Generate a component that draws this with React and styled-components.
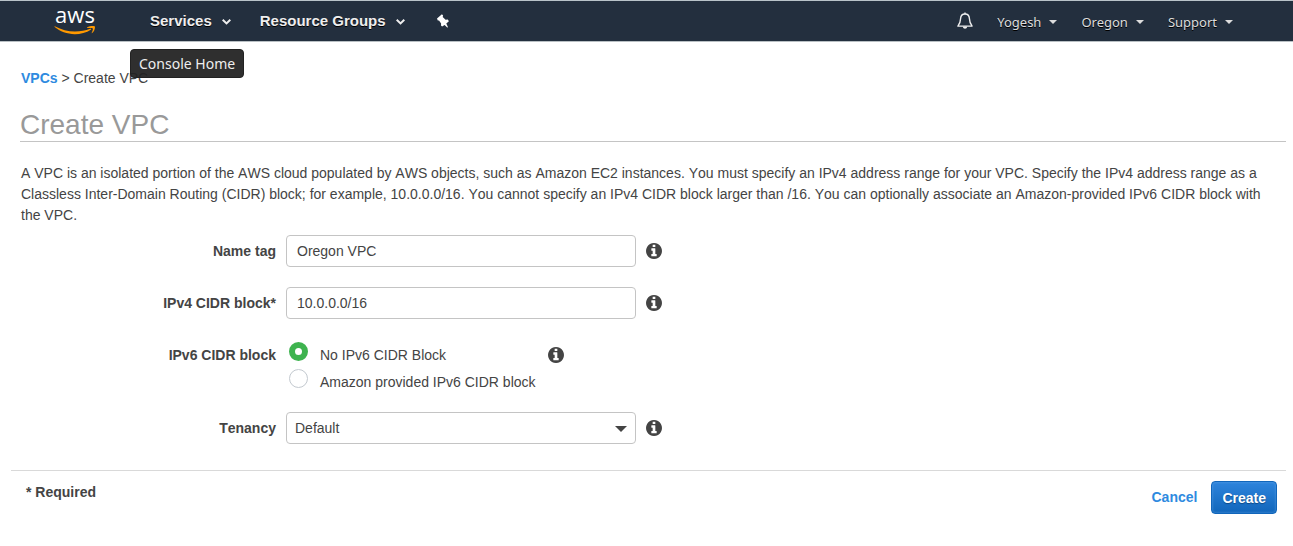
import React, { useState } from "react";
import styled, { createGlobalStyle } from "styled-components";

const GlobalStyle = createGlobalStyle`
  * { box-sizing: border-box; }
  body {
    margin: 0;
    background: #fff;
    color: #444;
    font: 14px/21px "Liberation Sans", Arial, sans-serif;
    font-kerning: none;
  }
`;

const Header = styled.header`
  display: flex;
  align-items: center;
  height: 42px;
  padding: 0 60px 0 54px;
  background: #232f3e;
  border-top: 1px solid #b9c3c9;
  border-bottom: 1px solid #b9c0c4;
`;

const Logo = styled.a`
  display: flex;
  flex-direction: column;
  align-items: center;
  gap: 5px;
  width: 42px;
  margin-right: 54px;
  color: #fff;
  font: 500 22px/14px "Open Sans", "Noto Sans", sans-serif;
  text-decoration: none;
  svg { display: block; }
`;

const NavGroup = styled.nav`
  display: flex;
  align-items: center;
  gap: ${(p) => p.$gap}px;
  margin-left: ${(p) => (p.$end ? "auto" : "0")};
`;

const MenuSlot = styled.div`
  position: relative;
`;

const MenuButton = styled.button`
  display: flex;
  align-items: center;
  gap: ${(p) => (p.$small ? 8 : 10)}px;
  padding: ${(p) => (p.$small ? "2px 0 0" : 0)};
  border: 0;
  background: none;
  color: ${(p) => (p.$small ? "#ddd" : "#eee")};
  font: ${(p) =>
    p.$small
      ? '13px/20px "Noto Sans", sans-serif'
      : 'bold 15px/20px "Liberation Sans", Arial, sans-serif'};
  font-kerning: auto;
  text-shadow: 0 1px 0 #000;
  cursor: pointer;
  svg { display: block; margin-top: ${(p) => (p.$small ? 0 : 2)}px; }
`;

const IconButton = styled.button`
  display: flex;
  padding: 0;
  border: 0;
  background: none;
  color: #fff;
  cursor: pointer;
`;

const Tooltip = styled.div`
  position: absolute;
  top: 38px;
  left: -20px;
  padding: 0 8px;
  border: 1px solid #222;
  border-radius: 4px;
  background: rgba(34, 34, 34, 0.94);
  color: #eee;
  font: 14px/27px "Noto Sans", sans-serif;
  white-space: nowrap;
`;

const Page = styled.main`
  padding: 26px 7px 0 11px;
`;

const Content = styled.div`
  padding-left: 9px;
`;

const Breadcrumb = styled.nav`
  padding: 0 1px;
`;

const Link = styled.a`
  color: #2e8ae0;
  font-weight: bold;
  text-decoration: none;
`;

const Title = styled.h1`
  margin: 20px 0 21px;
  border-bottom: 1px solid #c4c4c4;
  color: #999;
  font-size: 28px;
  font-weight: normal;
  line-height: 32px;
`;

const Intro = styled.p`
  margin: 0 0 9px;
  padding: 0 7px 0 1px;
`;

const Form = styled.form`
  margin: 0;
`;

const Row = styled.div`
  display: flex;
  align-items: ${(p) => (p.$top ? "flex-start" : "center")};
  gap: 10px;
  margin-bottom: ${(p) => (p.$top ? 19 : 20)}px;
  padding-top: ${(p) => (p.$top ? 6 : 0)}px;
`;

const Label = styled.label`
  width: 256px;
  color: #444;
  font-weight: bold;
  text-align: right;
`;

const TextInput = styled.input`
  width: 350px;
  height: 32px;
  padding: 0 10px;
  border: 1px solid #c4c4c4;
  border-radius: 4px;
  background: #fff;
  color: #444;
  font: inherit;
`;

const SelectBox = styled.div`
  display: grid;
  align-items: center;
  width: 350px;
  > * { grid-area: 1 / 1; }
  svg { justify-self: end; margin-right: 9px; margin-top: 2px; pointer-events: none; }
`;

const Select = styled.select`
  height: 32px;
  padding: 0 8px;
  border: 1px solid #c4c4c4;
  border-radius: 4px;
  background: #fff;
  color: #444;
  font: inherit;
  appearance: none;
`;

const RadioList = styled.div`
  display: flex;
  flex-direction: column;
  gap: 6px;
  width: 252px;
  padding: 0 3px;
`;

const RadioLabel = styled.label`
  display: flex;
  gap: 12px;
  white-space: nowrap;
`;

const Radio = styled.input`
  flex: none;
  width: 19px;
  height: 19px;
  margin: -3px 0 0;
  border: 1px solid #c3c9cf;
  border-radius: 50%;
  background: #fff;
  appearance: none;
  &:checked { border: 6px solid #3eb34f; }
`;

const InfoButton = styled.button`
  display: flex;
  padding: 0;
  margin-top: ${(p) => (p.$top ? 2 : 0)}px;
  border: 0;
  background: none;
  color: #444;
  cursor: pointer;
`;

const Footer = styled.footer`
  display: flex;
  justify-content: space-between;
  margin-top: 26px;
  padding: 10px 9px 0 15px;
  border-top: 1px solid #d9d9d9;
  font-weight: bold;
  line-height: 23px;
`;

const Actions = styled.div`
  display: flex;
  align-items: center;
  gap: 14px;
`;

const CreateButton = styled.button`
  height: 33px;
  padding: 1px 10px 0;
  border: 1px solid #1166bb;
  border-radius: 4px;
  background: linear-gradient(#2e84dc, #1166bb);
  box-shadow: inset 0 0 2px 1px rgba(100, 165, 230, 0.35);
  color: #fff;
  font: inherit;
  text-shadow: 0 1px 1px #0d4885;
  cursor: pointer;
`;

const Chevron = () => (
  <svg width="9" height="6" viewBox="0 0 9 6" fill="none" stroke="currentColor" strokeWidth="2">
    <path d="M0.7 0.8L4.5 4.4L8.3 0.8" />
  </svg>
);

const Caret = ({ width = 8, height = 4 }) => (
  <svg width={width} height={height} viewBox="0 0 8 4" preserveAspectRatio="none" fill="currentColor">
    <path d="M0 0H8L4 4Z" />
  </svg>
);

const Smile = () => (
  <svg width="42" height="10" viewBox="0 0 42 10" fill="#f90">
    <path d="M0.7 1.1C0.2 0.7 0.6 0.1 1.3 0.4C7 3.4 14 5.4 21 5.4C26.5 5.4 31.5 4.5 36.1 2.8C37 2.4 37.6 3.1 36.8 3.7C32.6 6.6 26.3 8.2 20.8 8.2C13 8.2 6 5.6 0.7 1.1Z" />
    <path d="M33.2 1.3C35.5-0.2 40.2-0.2 40.8 0.4C41.4 1.2 40.6 5.3 38.2 7.1C37.8 7.4 37.5 7.2 37.7 6.8C38.3 5.5 39.3 3.1 38.8 2.5C38.2 1.8 35.2 2 33.7 2.1C33.1 2.1 32.8 1.7 33.2 1.3Z" />
  </svg>
);

const Pin = () => (
  <svg width="15" height="14" viewBox="-3 0 15 14" fill="currentColor">
    <path d="M4.9 0.2L6.1 1.6L5.7 3.1L8.6 5.8L10.8 5.6L11.9 7.3L9.3 9.5L11 13.2L10.2 13.5L7.6 10.9L5.1 12.6L4 11.5L4.1 9.4L2 6.4L0.8 6.4L0 4.6Z" />
  </svg>
);

const Bell = () => (
  <svg width="16" height="18" viewBox="0 0 16 18" fill="none" stroke="#eee" strokeWidth="1.4" strokeLinejoin="round">
    <path d="M8 2C5 2 3.7 4.1 3.6 6.5C3.5 10.4 2.8 11.8 0.9 14.1H15.1C13.2 11.8 12.5 10.4 12.4 6.5C12.3 4.1 11 2 8 2Z" />
    <path d="M8 0.4V2" />
    <path d="M5.8 14.5C6 17.5 10 17.5 10.2 14.5Z" fill="#eee" stroke="none" />
  </svg>
);

const InfoIcon = () => (
  <svg width="16" height="16" viewBox="128 128 1536 1536" fill="currentColor">
    <path d="M1152 1376v-160q0-14-9-23t-23-9h-96v-512q0-14-9-23t-23-9h-320q-14 0-23 9t-9 23v160q0 14 9 23t23 9h96v320h-96q-14 0-23 9t-9 23v160q0 14 9 23t23 9h448q14 0 23-9t9-23zm-128-896v-160q0-14-9-23t-23-9h-192q-14 0-23 9t-9 23v160q0 14 9 23t23 9h192q14 0 23-9t9-23zm640 416q0 209-103 385.5t-279.5 279.5-385.5 103-385.5-103-279.5-279.5-103-385.5 103-385.5 279.5-279.5 385.5-103 385.5 103 279.5 279.5 103 385.5z" />
  </svg>
);

const Info = ({ topic, top }) => (
  <InfoButton type="button" aria-label={`About ${topic}`} $top={top}>
    <InfoIcon />
  </InfoButton>
);

export default function App() {
  const [name, setName] = useState("Oregon VPC");
  const [cidr, setCidr] = useState("10.0.0.0/16");
  const [ipv6, setIpv6] = useState("none");

  return (
    <>
      <GlobalStyle />
      <Header>
        <Logo href="#">
          <span>aws</span>
          <Smile />
        </Logo>
        <NavGroup $gap={29}>
          <MenuSlot>
            <MenuButton>Services <Chevron /></MenuButton>
            <Tooltip role="tooltip">Console Home</Tooltip>
          </MenuSlot>
          <MenuButton>Resource Groups <Chevron /></MenuButton>
          <IconButton aria-label="Pin shortcuts"><Pin /></IconButton>
        </NavGroup>
        <NavGroup $gap={24} $end>
          <IconButton aria-label="Notifications"><Bell /></IconButton>
          <MenuButton $small>Yogesh <Caret /></MenuButton>
          <MenuButton $small>Oregon <Caret /></MenuButton>
          <MenuButton $small>Support <Caret /></MenuButton>
        </NavGroup>
      </Header>
      <Page>
        <Form onSubmit={(e) => e.preventDefault()}>
          <Content>
            <Breadcrumb><Link href="#">VPCs</Link> &gt; Create VPC</Breadcrumb>
            <Title>Create VPC</Title>
            <Intro>
              A VPC is an isolated portion of the AWS cloud populated by AWS objects, such as Amazon EC2
              instances. You must specify an IPv4 address range for your VPC. Specify the IPv4 address
              range as a Classless Inter-Domain Routing (CIDR) block; for example, 10.0.0.0/16. You cannot
              specify an IPv4 CIDR block larger than /16. You can optionally associate an Amazon-provided
              IPv6 CIDR block with the VPC.
            </Intro>
            <Row>
              <Label htmlFor="name">Name tag</Label>
              <TextInput id="name" value={name} onChange={(e) => setName(e.target.value)} />
              <Info topic="name tag" />
            </Row>
            <Row>
              <Label htmlFor="cidr">IPv4 CIDR block*</Label>
              <TextInput id="cidr" required value={cidr} onChange={(e) => setCidr(e.target.value)} />
              <Info topic="IPv4 CIDR block" />
            </Row>
            <Row $top role="radiogroup" aria-labelledby="ipv6-label">
              <Label as="span" id="ipv6-label">IPv6 CIDR block</Label>
              <RadioList>
                <RadioLabel>
                  <Radio type="radio" name="ipv6" checked={ipv6 === "none"} onChange={() => setIpv6("none")} />
                  No IPv6 CIDR Block
                </RadioLabel>
                <RadioLabel>
                  <Radio type="radio" name="ipv6" checked={ipv6 === "amazon"} onChange={() => setIpv6("amazon")} />
                  Amazon provided IPv6 CIDR block
                </RadioLabel>
              </RadioList>
              <Info topic="IPv6 CIDR block" top />
            </Row>
            <Row>
              <Label htmlFor="tenancy">Tenancy</Label>
              <SelectBox>
                <Select id="tenancy" defaultValue="Default">
                  <option>Default</option>
                  <option>Dedicated</option>
                </Select>
                <Caret width={12} height={6} />
              </SelectBox>
              <Info topic="tenancy" />
            </Row>
          </Content>
          <Footer>
            <span>* Required</span>
            <Actions>
              <Link href="#">Cancel</Link>
              <CreateButton type="submit">Create</CreateButton>
            </Actions>
          </Footer>
        </Form>
      </Page>
    </>
  );
}
